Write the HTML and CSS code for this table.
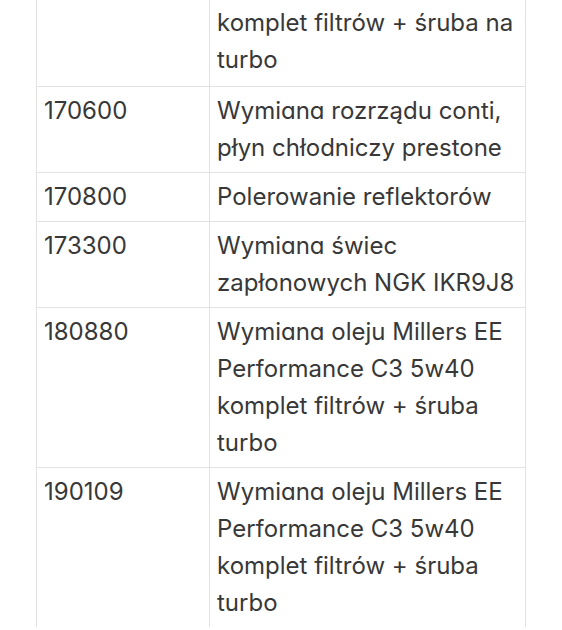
FILE: index.html
```html
<!DOCTYPE html>
<html lang="pl">
<head>
<meta charset="utf-8">
<link rel="stylesheet" href="styles.css">
</head>
<body>
<div class="wrap">
<table class="log">
<tbody>
<tr class="first"><td class="km"></td><td class="desc">komplet filtrów + śruba na turbo</td></tr>
<tr><td class="km">170600</td><td class="desc">Wymiɑnɑ rozrządu conti, płyn chłodniczy prestone</td></tr>
<tr><td class="km">170800</td><td class="desc">Polerowanie reflektorów</td></tr>
<tr><td class="km">173300</td><td class="desc">Wymiɑnɑ świec zapłonowych NGK IKR9J8</td></tr>
<tr><td class="km">180880</td><td class="desc">Wymiɑnɑ oleju Millers EE Performance C3 5w40 komplet filtrów + śruba turbo</td></tr>
<tr class="last"><td class="km">190109</td><td class="desc">Wymiɑnɑ oleju Millers EE Performance C3 5w40 komplet filtrów + śruba turbo</td></tr>
</tbody>
</table>
</div>
</body>
</html>
```
FILE: styles.css
```css
html, body {
  margin: 0;
  padding: 0;
  background: #ffffff;
}
.wrap {
  padding-left: 36px;
}
.log {
  border-collapse: collapse;
  width: 490px;
  table-layout: fixed;
  font-family: Inter, "Noto Sans", sans-serif;
  font-size: 24px;
  line-height: 37px;
  color: #383838;
}
.log td {
  border: 1px solid #e2e2e2;
  padding: 5px 6px 6px 7px;
  vertical-align: top;
}
.log td.km {
  width: 157px;
  padding-right: 8px;
}
.log tr.first td {
  border-top: none;
  padding-top: 4px;
  padding-bottom: 8px;
}
.log tr.last td {
  border-bottom: none;
}
```
